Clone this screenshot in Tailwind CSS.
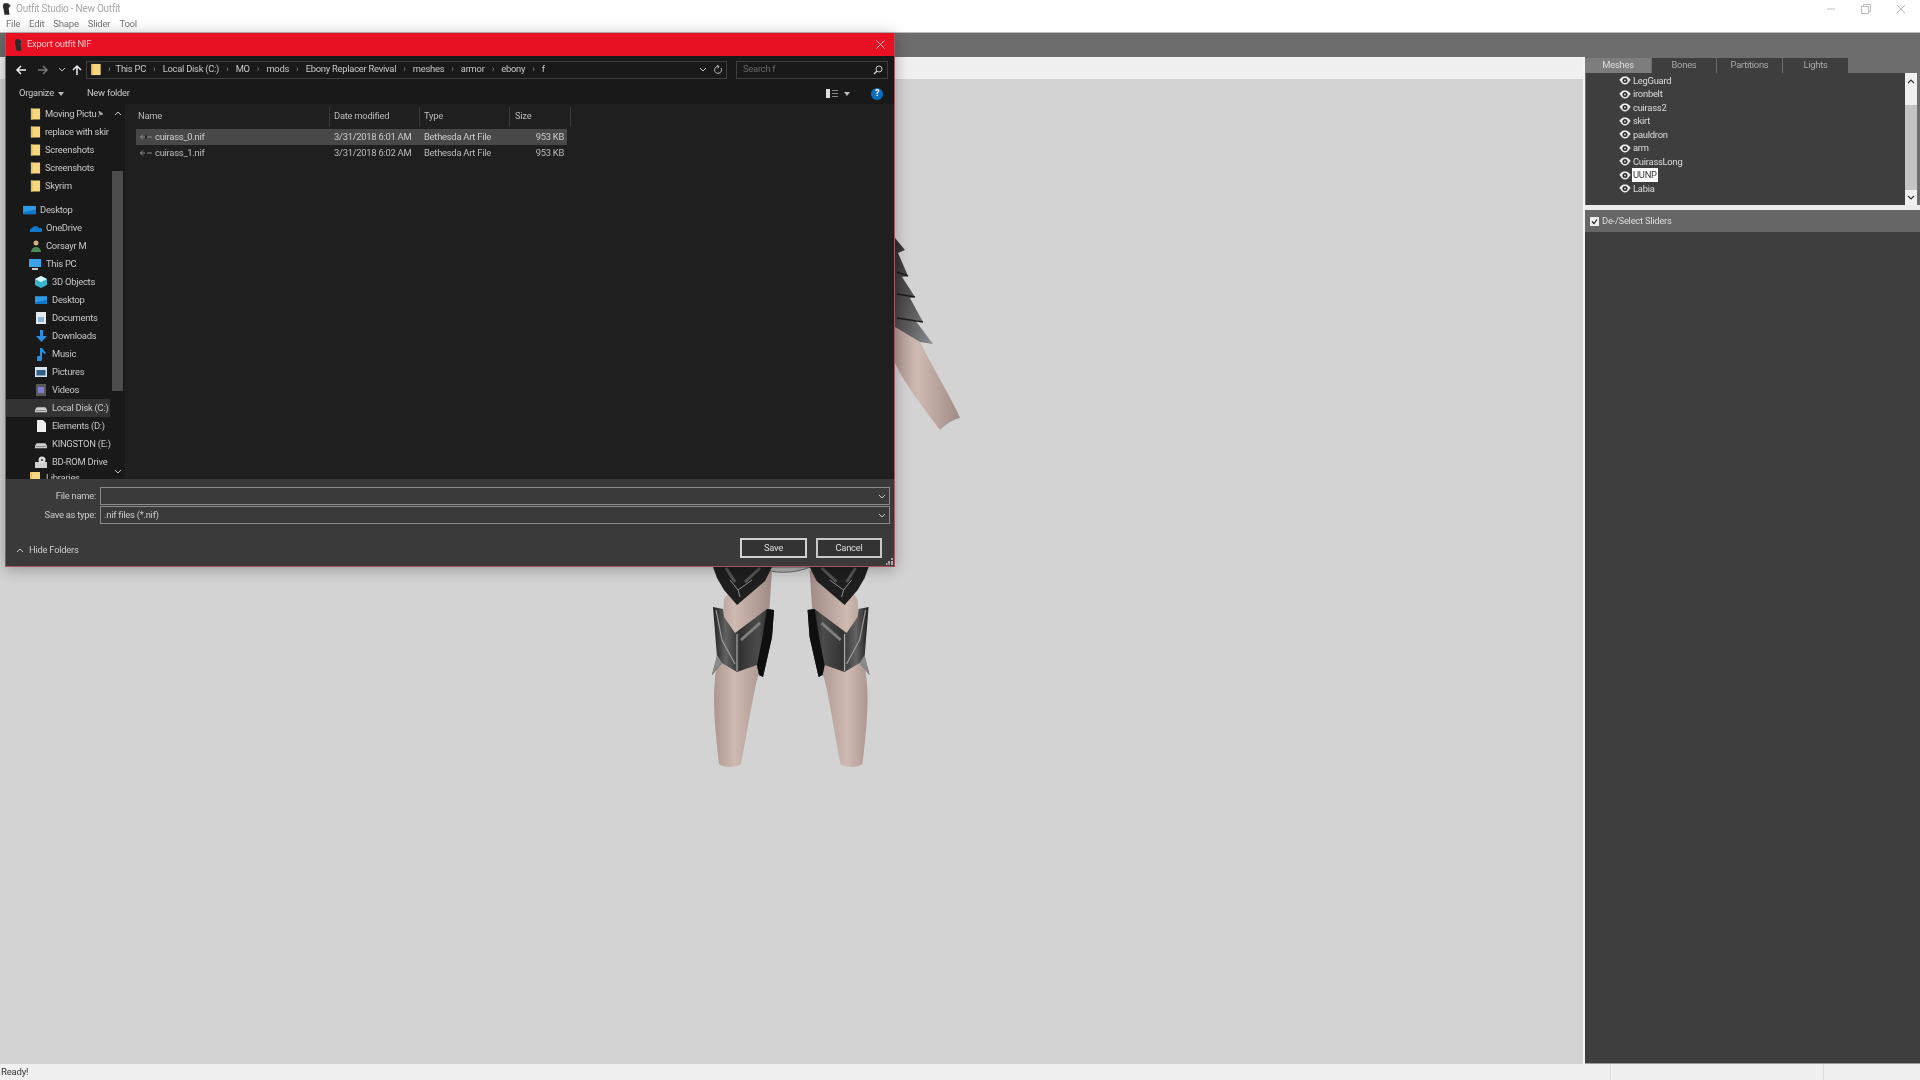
<!DOCTYPE html>
<html lang="en">
<head>
<meta charset="utf-8">
<title>Outfit Studio - New Outfit</title>
<script src="https://cdn.jsdelivr.net/npm/@tailwindcss/browser@4"></script>
</head>
<body class="m-0 overflow-hidden bg-white">
<svg class="absolute w-0 h-0">
  <defs>
    <symbol id="folder" viewBox="0 0 12 14"><path d="M1 1h10v12H1z" fill="#f6d77f"/><path d="M1 1h2v12H1z" fill="#e8bf58"/></symbol>
    <symbol id="logo" viewBox="0 0 12 16"><path d="M2 1h5l3 3-2 3 1 8H3L2 9 1 5z" fill="#2a2a2a"/><path d="M7 1l3 3-2 3" fill="none" stroke="#8a6a5a"/></symbol>
    <symbol id="eye" viewBox="0 0 14 10"><path d="M0.5 4.500C3 1 5 0.500 7 0.500s4 .5 6.500 4l-1 .5C11 8 9 9.500 7 9.500S3 8 1.500 5z" fill="#eee"/><circle cx="7" cy="5" r="2.800" fill="#2c2c2c"/><circle cx="7" cy="5" r="1" fill="#ddd"/></symbol>
    <symbol id="nif" viewBox="0 0 12 8"><path d="M0 4h12M3 1.500 0.500 4 3 6.500" fill="none" stroke="#888" stroke-width="1"/><path d="M5 4h2" stroke="#222" stroke-width="3"/></symbol>
    <symbol id="chev" viewBox="0 0 8 5"><path d="M1 1l3 3 3-3" fill="none" stroke="#c8c8c8" stroke-width="1"/></symbol>
    <symbol id="chevdark" viewBox="0 0 8 5"><path d="M1 1l3 3 3-3" fill="none" stroke="#333" stroke-width="1.200"/></symbol>
    <symbol id="drive" viewBox="0 0 14 12"><path d="M2 5h10l2 3v3H0V8z" fill="#cfcfcf"/><path d="M1 9h12" stroke="#777"/></symbol>
    <symbol id="screen" viewBox="0 0 14 12"><path d="M0 1h14v9H0z" fill="#2e9be6"/><path d="M0 8l14-3v5H0z" fill="#0f77cc"/></symbol>
    <g id="leg">
      <path d="M724 600C726 590 768 570 772 570L770 600C768 640 762 665 757 680C752 700 745 745 741 764C736 768 724 768 719 764C717 745 712 705 715 680C716 665 722 640 724 600Z" fill="url(#skin)"/>
      <path d="M713 567 772 567 765 581 737 605 724 590 717 578z" fill="#1f1f1f"/>
      <path d="M730 580 738 590 752 580M738 590 740 597" fill="none" stroke="#8d8d8d" stroke-width="1"/>
      <path d="M726 568 735 582M760 568 745 582" fill="none" stroke="#555" stroke-width="3"/>
      <path d="M712 675 717 657 713 607 723 609 724 617 735 633 767 609 774 610 772 637 763 677 759 675 757 665 737 672 722 663z" fill="url(#guard)"/>
      <path d="M712 675 717 655 722 663z" fill="#8a8a8a"/>
      <path d="M767 609 774 610 772 637 763 677 759 675 757 665 762 640z" fill="#0f0f0f"/>
      <path d="M737 634V671" stroke="#a8a8a8" stroke-width="1.200"/>
      <path d="M716 610 722 640 735 664" fill="none" stroke="#9c9c9c" stroke-width="1.200"/>
      <path d="M741 640 760 623" fill="none" stroke="#808080" stroke-width="3"/>
    </g>
    <linearGradient id="skin" x1="0" x2="1" y1="0" y2="0"><stop offset="0" stop-color="#ad9691"/><stop offset=".35" stop-color="#cfbab2"/><stop offset="1" stop-color="#a08a85"/></linearGradient>
    <linearGradient id="guard" x1="0" x2="1" y1="0" y2="0"><stop offset="0" stop-color="#1a1a1a"/><stop offset=".22" stop-color="#626262"/><stop offset=".45" stop-color="#333"/><stop offset=".75" stop-color="#4c4c4c"/><stop offset="1" stop-color="#1c1c1c"/></linearGradient>
    <linearGradient id="plate" x1="0" x2="1" y1="0" y2="1"><stop offset="0" stop-color="#2c2c2c"/><stop offset=".6" stop-color="#5d5d5d"/><stop offset="1" stop-color="#8a8f96"/></linearGradient>
  </defs>
</svg>

<div class="relative flex h-[1080px] w-[1920px] flex-col overflow-hidden bg-white blur-[0.4px] tracking-[-0.25px] font-['Roboto','Open_Sans',sans-serif]">
  <!-- title bar -->
  <div class="flex h-[17px] shrink-0 items-center pl-[2px] text-[10px] text-[#a8a8a8]">
    <svg class="h-[14px] w-[10px]"><use href="#logo"/></svg>
    <span class="ml-[4px]">Outfit Studio - New Outfit</span>
    <div class="ml-auto flex h-full items-center">
      <svg class="mr-[25px] h-[10px] w-[10px]" viewBox="0 0 10 10"><path d="M1 5h8" stroke="#c4c4c4"/></svg>
      <svg class="mr-[25px] h-[10px] w-[10px]" viewBox="0 0 10 10"><path d="M.5 2.500h7v7h-7zM2.500 2.500v-2h7v7h-2" fill="none" stroke="#bbb"/></svg>
      <svg class="mr-[14px] h-[10px] w-[10px]" viewBox="0 0 10 10"><path d="M1 1l8 8M9 1l-8 8" stroke="#bbb"/></svg>
    </div>
  </div>
  <!-- menu -->
  <div class="flex h-[15px] shrink-0 items-center gap-[9px] pl-[6px] text-[9.600px] text-[#777]">
    <span>File</span><span>Edit</span><span>Shape</span><span>Slider</span><span>Tool</span>
  </div>
  <div class="h-[1px] shrink-0 bg-[#bdbdbd]"></div>
  <!-- gray toolbar -->
  <div class="h-[24px] shrink-0 bg-[#6d6d6d]"></div>
  <!-- main -->
  <div class="flex min-h-0 flex-1">
    <div class="flex w-[1583px] shrink-0 flex-col">
      <div class="h-[22px] shrink-0 bg-[#f0f0f0]"></div>
      <div class="flex-1 bg-[#d3d3d3]"></div>
    </div>
    <div class="w-[2px] shrink-0 bg-[#f4f4f4]"></div>
    <div class="flex min-w-0 flex-1 flex-col bg-[#3e3e3e]">
      <div class="flex-none bg-[#6d6d6d]">
        <div class="flex h-[16px] gap-[1px] pt-[1px] text-center text-[9.400px] leading-[14px] text-[#aaa]">
          <span class="w-[66px] bg-[#7d7d7d] text-[#ddd]">Meshes</span>
          <span class="w-[64px] bg-[#3e3e3e]">Bones</span>
          <span class="w-[65px] bg-[#3e3e3e]">Partitions</span>
          <span class="w-[65px] bg-[#3e3e3e]">Lights</span>
        </div>
        <div class="flex h-[132px] pl-[1px] pr-[3px]">
          <div class="flex-1 bg-[#3e3e3e] pl-[32px] pt-[1px] text-[9.400px] text-[#ddd]">
            <div class="flex h-[13.500px] items-center gap-[1px]"><svg class="h-[9px] w-[14px]"><use href="#eye"/></svg><span>LegGuard</span></div>
            <div class="flex h-[13.500px] items-center gap-[1px]"><svg class="h-[9px] w-[14px]"><use href="#eye"/></svg><span>ironbelt</span></div>
            <div class="flex h-[13.500px] items-center gap-[1px]"><svg class="h-[9px] w-[14px]"><use href="#eye"/></svg><span>cuirass2</span></div>
            <div class="flex h-[13.500px] items-center gap-[1px]"><svg class="h-[9px] w-[14px]"><use href="#eye"/></svg><span>skirt</span></div>
            <div class="flex h-[13.500px] items-center gap-[1px]"><svg class="h-[9px] w-[14px]"><use href="#eye"/></svg><span>pauldron</span></div>
            <div class="flex h-[13.500px] items-center gap-[1px]"><svg class="h-[9px] w-[14px]"><use href="#eye"/></svg><span>arm</span></div>
            <div class="flex h-[13.500px] items-center gap-[1px]"><svg class="h-[9px] w-[14px]"><use href="#eye"/></svg><span>CuirassLong</span></div>
            <div class="flex h-[13.500px] items-center"><svg class="h-[9px] w-[14px]"><use href="#eye"/></svg><span class="bg-white px-[1px] leading-[14px] text-[#333]">UUNP</span></div>
            <div class="flex h-[13.500px] items-center gap-[1px]"><svg class="h-[9px] w-[14px]"><use href="#eye"/></svg><span>Labia</span></div>
          </div>
          <div class="flex w-[12px] flex-col bg-[#f0f0f0]">
            <svg class="mx-auto mt-[6px] h-[5px] w-[8px] rotate-180"><use href="#chevdark"/></svg>
            <div class="mt-[21px] flex-1 bg-[#c4c4c4]"></div>
            <svg class="mx-auto my-[5px] h-[5px] w-[8px]"><use href="#chevdark"/></svg>
          </div>
        </div>
      </div>
      <div class="h-[5px] shrink-0 bg-[#ececec]"></div>
      <div class="flex h-[22px] shrink-0 items-center bg-[#666] pl-[5px] text-[9.400px] text-[#ddd]">
        <svg class="h-[9px] w-[9px]" viewBox="0 0 9 9"><rect width="9" height="9" fill="#eee"/><path d="M2 4.500l2 2 3-4" fill="none" stroke="#222" stroke-width="1.200"/></svg>
        <span class="ml-[3px]">De-/Select Sliders</span>
      </div>
      <div class="flex-1"></div>
      <div class="h-[1px] shrink-0 bg-[#9a9a9a]"></div>
    </div>
  </div>
  <!-- status -->
  <div class="flex h-[16px] shrink-0 items-center bg-[#f0f0f0] pl-[1px] text-[9.600px] text-[#333]">
    <span>Ready!</span>
    <div class="ml-auto h-full w-[213px] border-l border-[#dcdcdc]"></div>
    <div class="h-full w-[97px] border-l border-[#dcdcdc]"></div>
  </div>

  <!-- 3D model on the canvas -->
  <svg class="absolute left-0 top-0 h-[1080px] w-[1920px] blur-[0.6px]" viewBox="0 0 1920 1080">
    <path d="M895 327 920 342C935 372 950 395 960 418Q950 420 940 430C925 410 905 385 895 363z" fill="url(#skin)"/>
    <path d="M895 238 905 250 898 253 908 276 902 277 915 297 910 298 923 322 915 320 933 344 920 342 895 327z" fill="url(#plate)"/>
    <path d="M897 272 908 276M897 294 915 297M897 318 923 322" stroke="#1c1c1c" stroke-width="1.500"/>
    <path d="M761 567C770 574 795 574 810 567z" fill="#b5b5b5" stroke="#666"/>
    <use href="#leg"/>
    <use href="#leg" transform="matrix(-1 0 0 1 1581.600 0)"/>
  </svg>

  <!-- dialog -->
  <div class="absolute left-[5px] top-[33px] flex h-[534px] w-[890px] flex-col border border-t-0 border-[#a8545e] bg-[#1f1f1f] text-[9.400px] text-[#c8c8c8] shadow-[0_2px_14px_rgba(0,0,0,0.3)]">
    <div class="flex h-[23px] shrink-0 items-center bg-[#e81123] pl-[8px] pr-[9px] text-[#f5c4c8]">
      <svg class="h-[14px] w-[10px]"><use href="#logo"/></svg>
      <span class="ml-[3px]">Export outfit NIF</span>
      <svg class="ml-auto h-[9px] w-[9px]" viewBox="0 0 9 9"><path d="M.5.5l8 8M8.500.5l-8 8" stroke="#f4c6ca"/></svg>
    </div>
    <div class="flex h-[48px] shrink-0 flex-col bg-[#191919]">
      <div class="flex h-[27px] items-center">
        <svg class="ml-[9px] h-[12px] w-[12px]" viewBox="0 0 12 12"><path d="M11 6H2M6 2 2 6l4 4" fill="none" stroke="#eee" stroke-width="1.500"/></svg>
        <svg class="ml-[10px] h-[12px] w-[12px]" viewBox="0 0 12 12"><path d="M1 6h9M6 2l4 4-4 4" fill="none" stroke="#777" stroke-width="1.500"/></svg>
        <svg class="ml-[9px] h-[5px] w-[8px]"><use href="#chev"/></svg>
        <svg class="ml-[5px] h-[12px] w-[12px]" viewBox="0 0 12 12"><path d="M6 11V2M2 6l4-4 4 4" fill="none" stroke="#eee" stroke-width="1.500"/></svg>
        <div class="ml-[3px] flex h-[18px] w-[641px] items-center border border-[#3e3e3e] pl-[3px] pr-[3px]">
          <svg class="h-[13px] w-[12px]"><use href="#folder"/></svg>
          <span class="ml-[6px] text-[#888]">›</span><span class="ml-[5px]">This PC</span>
          <span class="ml-[7px] text-[#888]">›</span><span class="ml-[7px]">Local Disk (C:)</span>
          <span class="ml-[7px] text-[#888]">›</span><span class="ml-[7px]">MO</span>
          <span class="ml-[7px] text-[#888]">›</span><span class="ml-[7px]">mods</span>
          <span class="ml-[7px] text-[#888]">›</span><span class="ml-[7px]">Ebony Replacer Revival</span>
          <span class="ml-[7px] text-[#888]">›</span><span class="ml-[7px]">meshes</span>
          <span class="ml-[7px] text-[#888]">›</span><span class="ml-[7px]">armor</span>
          <span class="ml-[7px] text-[#888]">›</span><span class="ml-[7px]">ebony</span>
          <span class="ml-[7px] text-[#888]">›</span><span class="ml-[7px]">f</span>
          <svg class="ml-auto h-[5px] w-[8px]"><use href="#chev"/></svg>
          <svg class="ml-[6px] h-[10px] w-[10px]" viewBox="0 0 10 10"><path d="M8 3a3.500 3.500 0 1 1-2-1.500M4 0l2 1.500L4.500 3.500" fill="none" stroke="#bbb"/></svg>
        </div>
        <div class="ml-[9px] flex h-[18px] w-[152px] items-center border border-[#3e3e3e] pl-[6px] pr-[4px] text-[#666]">
          <span>Search f</span>
          <svg class="ml-auto h-[10px] w-[10px]" viewBox="0 0 10 10"><circle cx="6" cy="4" r="3" fill="none" stroke="#ccc"/><path d="M4 6 1 9" stroke="#ccc" stroke-width="1.400"/></svg>
        </div>
      </div>
      <div class="flex h-[21px] items-center">
        <span class="ml-[13px]">Organize</span>
        <svg class="ml-[4px] h-[4px] w-[6px]" viewBox="0 0 6 4"><path d="M0 0h6L3 4z" fill="#bbb"/></svg>
        <span class="ml-[23px]">New folder</span>
        <svg class="ml-auto h-[9px] w-[12px]" viewBox="0 0 12 9"><path d="M0 0h4v9H0z" fill="#ddd"/><path d="M6 1.500h6M6 4.500h6M6 7.500h6" stroke="#888"/></svg>
        <svg class="ml-[6px] h-[4px] w-[6px]" viewBox="0 0 6 4"><path d="M0 0h6L3 4z" fill="#bbb"/></svg>
        <div class="ml-[21px] mr-[11px] flex h-[12px] w-[12px] items-center justify-center rounded-full bg-[#0b6cc0] text-[9px] font-bold leading-none text-white">?</div>
      </div>
    </div>
    <div class="flex min-h-0 flex-1">
      <!-- nav pane -->
      <div class="relative w-[119px] shrink-0 overflow-hidden whitespace-nowrap bg-[#191919] pt-[1px]">
        <div class="flex h-[18px] items-center pl-[24px]"><svg class="h-[14px] w-[11px]"><use href="#folder"/></svg><span class="ml-[4px]">Moving Pictu</span><svg class="ml-[1px] h-[8px] w-[7px]" viewBox="0 0 7 8"><path d="M1 7l2-3M2 1l4 3-2 1-2-2z" fill="#aaa" stroke="#aaa" stroke-width=".6"/></svg></div>
        <div class="flex h-[18px] items-center pl-[24px]"><svg class="h-[14px] w-[11px]"><use href="#folder"/></svg><span class="ml-[4px]">replace with skir</span></div>
        <div class="flex h-[18px] items-center pl-[24px]"><svg class="h-[14px] w-[11px]"><use href="#folder"/></svg><span class="ml-[4px]">Screenshots</span></div>
        <div class="flex h-[18px] items-center pl-[24px]"><svg class="h-[14px] w-[11px]"><use href="#folder"/></svg><span class="ml-[4px]">Screenshots</span></div>
        <div class="flex h-[18px] items-center pl-[24px]"><svg class="h-[14px] w-[11px]"><use href="#folder"/></svg><span class="ml-[4px]">Skyrim</span></div>
        <div class="mt-[6px] flex h-[18px] items-center pl-[17px]"><svg class="h-[11px] w-[13px]"><use href="#screen"/></svg><span class="ml-[4px]">Desktop</span></div>
        <div class="flex h-[18px] items-center pl-[23px]"><svg class="h-[9px] w-[13px]" viewBox="0 0 13 9"><path d="M1 8a3 3 0 0 1 2-4 4 4 0 0 1 7 0 2 2 0 0 1 2 4z" fill="#0f77cc"/></svg><span class="ml-[4px]">OneDrive</span></div>
        <div class="flex h-[18px] items-center pl-[25px]"><svg class="h-[12px] w-[10px]" viewBox="0 0 10 12"><circle cx="5" cy="3" r="2.500" fill="#d6ae86"/><path d="M0 12a5 5 0 0 1 10 0z" fill="#4d8a59"/></svg><span class="ml-[5px]">Corsayr M</span></div>
        <div class="flex h-[18px] items-center pl-[23px]"><svg class="h-[12px] w-[12px]" viewBox="0 0 12 12"><path d="M0 1h12v8H0z" fill="#3aa3ea"/><path d="M3 11h6" stroke="#ccc" stroke-width="2"/></svg><span class="ml-[5px]">This PC</span></div>
        <div class="flex h-[18px] items-center pl-[29px]"><svg class="h-[12px] w-[12px]" viewBox="0 0 12 12"><path d="M6 0l6 3v6l-6 3-6-3V3z" fill="#37b5cf"/><path d="M6 0l6 3-6 3-6-3z" fill="#d8f1f6"/></svg><span class="ml-[5px]">3D Objects</span></div>
        <div class="flex h-[18px] items-center pl-[29px]"><svg class="h-[11px] w-[12px]"><use href="#screen"/></svg><span class="ml-[5px]">Desktop</span></div>
        <div class="flex h-[18px] items-center pl-[30px]"><svg class="h-[12px] w-[10px]" viewBox="0 0 10 12"><path d="M0 0h10v12H0z" fill="#e4e9ee"/><path d="M2 5h6v5H2z" fill="#8db4d3"/></svg><span class="ml-[6px]">Documents</span></div>
        <div class="flex h-[18px] items-center pl-[30px]"><svg class="h-[12px] w-[11px]" viewBox="0 0 11 12"><path d="M4 0h3v6h4l-5.500 6L0 6h4z" fill="#2a8fe0"/></svg><span class="ml-[5px]">Downloads</span></div>
        <div class="flex h-[18px] items-center pl-[31px]"><svg class="h-[13px] w-[9px]" viewBox="0 0 9 13"><path d="M3 0h2l4 5-1 1-3-2v6a3 3 0 1 1-2-2z" fill="#2a8fe0"/></svg><span class="ml-[6px]">Music</span></div>
        <div class="flex h-[18px] items-center pl-[29px]"><svg class="h-[10px] w-[12px]" viewBox="0 0 12 10"><path d="M0 0h12v10H0z" fill="#d9e6ef"/><path d="M1.500 3h9v5.500h-9z" fill="#315f86"/></svg><span class="ml-[5px]">Pictures</span></div>
        <div class="flex h-[18px] items-center pl-[30px]"><svg class="h-[12px] w-[10px]" viewBox="0 0 10 12"><path d="M0 0h10v12H0z" fill="#5a5a5a"/><path d="M2 3h6v6H2z" fill="#7a7fd0"/></svg><span class="ml-[6px]">Videos</span></div>
        <div class="flex h-[18px] w-[104px] items-center bg-[#333] pl-[29px]"><svg class="h-[12px] w-[12px]"><use href="#drive"/></svg><span class="ml-[5px]">Local Disk (C:)</span></div>
        <div class="flex h-[18px] items-center pl-[31px]"><svg class="h-[12px] w-[9px]" viewBox="0 0 9 12"><path d="M0 0h6l3 3v9H0z" fill="#eee"/></svg><span class="ml-[6px]">Elements (D:)</span></div>
        <div class="flex h-[18px] items-center pl-[29px]"><svg class="h-[12px] w-[12px]"><use href="#drive"/></svg><span class="ml-[5px]">KINGSTON (E:)</span></div>
        <div class="flex h-[18px] items-center pl-[29px]"><svg class="h-[12px] w-[12px]" viewBox="0 0 12 12"><path d="M0 6h12v6H0z" fill="#cfcfcf"/><circle cx="7" cy="4" r="3.500" fill="#ddd"/><circle cx="7" cy="4" r="1" fill="#333"/></svg><span class="ml-[5px]">BD-ROM Drive</span></div>
        <div class="flex h-[18px] items-start pl-[23px]"><svg class="h-[14px] w-[12px]"><use href="#folder"/></svg><span class="ml-[5px]">Libraries</span></div>
        <div class="absolute bottom-0 right-[2px] top-0 flex w-[11px] flex-col items-center bg-[#191919]">
          <svg class="mt-[7px] h-[5px] w-[8px] rotate-180"><use href="#chev"/></svg>
          <div class="mt-[55px] h-[220px] w-[11px] shrink-0 bg-[#4d4d4d]"></div>
          <svg class="mt-[78px] h-[5px] w-[8px]"><use href="#chev"/></svg>
        </div>
      </div>
      <!-- files -->
      <div class="min-w-0 flex-1 whitespace-nowrap bg-[#1f1f1f] pl-[11px]">
        <div class="flex h-[25px] w-[445px] items-center text-[#bbb]">
          <div class="flex h-[20px] w-[194px] items-center border-r border-[#3a3a3a] pl-[2px]">Name</div>
          <div class="flex h-[20px] w-[90px] items-center border-r border-[#3a3a3a] pl-[4px]">Date modified</div>
          <div class="flex h-[20px] w-[90px] items-center border-r border-[#3a3a3a] pl-[4px]">Type</div>
          <div class="flex h-[20px] w-[61px] items-center border-r border-[#3a3a3a] pl-[5px]">Size</div>
        </div>
        <div class="flex h-[16px] w-[431px] items-center bg-[#484848] text-[#ccc]">
          <svg class="ml-[4px] h-[8px] w-[12px]"><use href="#nif"/></svg><span class="ml-[3px] w-[179px]">cuirass_0.nif</span><span class="w-[90px]">3/31/2018 6:01 AM</span><span class="w-[90px]">Bethesda Art File</span><span class="w-[50px] text-right">953 KB</span>
        </div>
        <div class="flex h-[16px] w-[431px] items-center text-[#bbb]">
          <svg class="ml-[4px] h-[8px] w-[12px]"><use href="#nif"/></svg><span class="ml-[3px] w-[179px]">cuirass_1.nif</span><span class="w-[90px]">3/31/2018 6:02 AM</span><span class="w-[90px]">Bethesda Art File</span><span class="w-[50px] text-right">953 KB</span>
        </div>
      </div>
    </div>
    <!-- bottom -->
    <div class="relative flex h-[87px] shrink-0 flex-col bg-[#3a3a3a] pt-[8px] text-[#ccc]">
      <div class="flex h-[18px] items-center">
        <span class="w-[90px] text-right">File name:</span>
        <div class="ml-[4px] flex h-[18px] w-[790px] items-center border border-[#8c8c8c] pr-[3px]"><svg class="ml-auto h-[5px] w-[8px]"><use href="#chev"/></svg></div>
      </div>
      <div class="mt-[1px] flex h-[18px] items-center">
        <span class="w-[90px] text-right">Save as type:</span>
        <div class="ml-[4px] flex h-[18px] w-[790px] items-center border border-[#8c8c8c] pl-[3px] pr-[3px]"><span>.nif files (*.nif)</span><svg class="ml-auto h-[5px] w-[8px]"><use href="#chev"/></svg></div>
      </div>
      <div class="mt-[14px] flex h-[20px] items-center">
        <svg class="ml-[10px] mt-[5px] h-[5px] w-[8px] rotate-180"><use href="#chev"/></svg>
        <span class="ml-[5px] mt-[5px]">Hide Folders</span>
        <button class="ml-auto h-[20px] w-[67px] border-2 border-[#d0d0d0] bg-[#333] leading-none text-[#ddd]">Save</button>
        <button class="ml-[9px] mr-[12px] h-[20px] w-[66px] border-2 border-[#c8c8c8] bg-[#333] leading-none text-[#ddd]">Cancel</button>
      </div>
      <svg class="absolute bottom-[1px] right-[1px] h-[7px] w-[7px]" viewBox="0 0 7 7"><path d="M5 0h2v2H5zM2 3h2v2H2zM5 3h2v2H5zM0 5h1.500v2H0zM2.500 5H4v2H2.500zM5 5h2v2H5z" fill="#aaa"/></svg>
    </div>
  </div>
</div>
</body>
</html>
